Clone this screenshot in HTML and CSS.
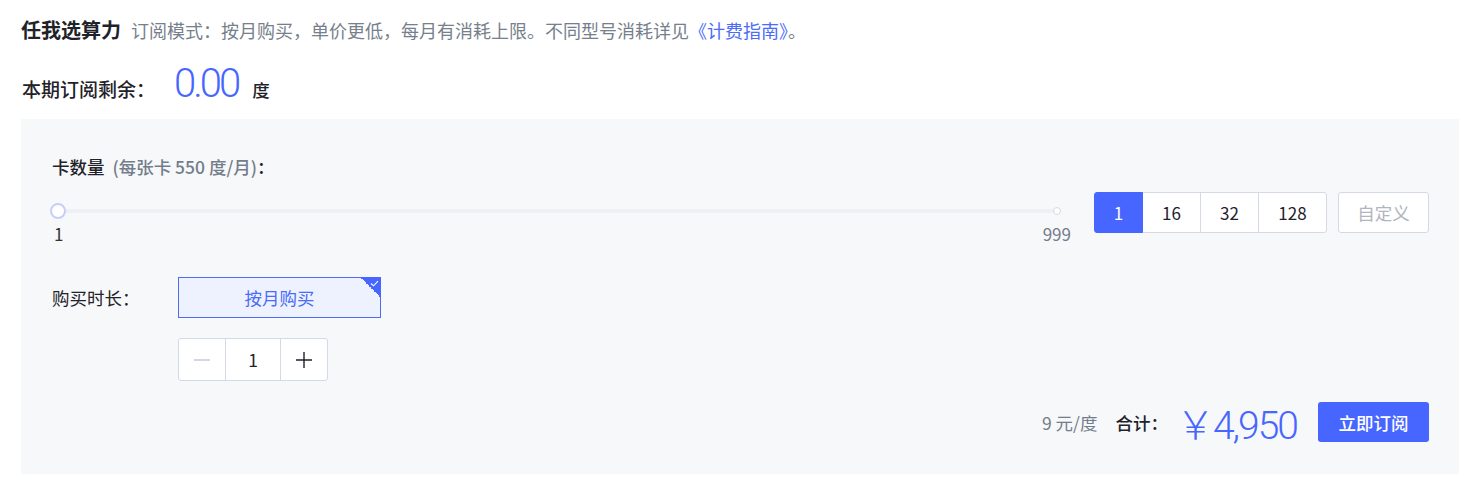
FILE: index.html
```html
<!DOCTYPE html>
<html lang="zh-CN">
<head>
  <meta charset="UTF-8">
  <meta name="viewport" content="width=device-width, initial-scale=1.0">
  <title>任我选算力</title>
  <link rel="stylesheet" href="styles.css">
</head>
<body>
  <div class="head">
    <h1>任我选算力</h1>
    <p class="desc">订阅模式：按月购买，单价更低，每月有消耗上限。不同型号消耗详见<a href="#">《计费指南》</a>。</p>
  </div>

  <div class="remain">
    <span class="remain-label">本期订阅剩余：</span>
    <span class="remain-num">0.00</span>
    <span class="remain-unit">度</span>
  </div>

  <div class="panel">
    <div class="field-title">卡数量 <span class="hint">(每张卡 550 度/月)</span>：</div>

    <div class="count-row">
      <div class="slider">
        <div class="track">
          <span class="thumb"></span>
          <span class="end-dot"></span>
        </div>
        <div class="marks">
          <span class="min">1</span>
          <span class="max">999</span>
        </div>
      </div>
      <div class="presets">
        <button class="preset active w1">1</button>
        <button class="preset w2">16</button>
        <button class="preset w2">32</button>
        <button class="preset w3">128</button>
      </div>
      <button class="custom">自定义</button>
    </div>

    <div class="period-row">
      <span class="label">购买时长：</span>
      <div class="option">
        按月购买
        <span class="corner">
          <svg width="9" height="7" viewBox="0 0 9 7"><path d="M1 3.5 L3.5 5.8 L8 1.2" fill="none" stroke="#fff" stroke-width="1.1"/></svg>
        </span>
      </div>
    </div>

    <div class="stepper">
      <span class="step minus">
        <svg width="16" height="16" viewBox="0 0 16 16"><path d="M0 8 H16" stroke="#c0c6d0" stroke-width="1.4"/></svg>
      </span>
      <span class="step value">1</span>
      <span class="step plus">
        <svg width="16" height="16" viewBox="0 0 16 16"><path d="M0 8 H16 M8 0 V16" stroke="#1f2329" stroke-width="1.4"/></svg>
      </span>
    </div>

    <div class="total-row">
      <span class="unit-price">9 元/度</span>
      <span class="total-label">合计：</span>
      <span class="total-num">￥4,950</span>
      <button class="buy">立即订阅</button>
    </div>
  </div>
</body>
</html>
```

FILE: styles.css
```css
* {
  box-sizing: border-box;
  margin: 0;
  padding: 0;
}
body {
  font-family: 'Noto Sans CJK SC', 'Noto Sans', sans-serif;
  color: #1f2329;
  background: #fff;
  padding: 16px 16px 0 21px;
}
button {
  font-family: inherit;
  background: none;
  border: none;
}
.head {
  display: flex;
  align-items: baseline;
  height: 28px;
  line-height: 28px;
}
h1 {
  font-size: 20px;
  font-weight: 700;
  margin-right: 10px;
}
.desc {
  font-size: 18px;
  color: #777f8c;
}
.desc a {
  color: #4a6cf7;
  text-decoration: none;
}
.remain {
  display: flex;
  align-items: baseline;
  margin-top: 16px;
  height: 48px;
  line-height: 48px;
}
.remain-label {
  font-size: 19px;
  font-weight: 500;
  width: 153px;
  padding-left: 1px;
}
.remain-num {
  font-family: 'Roboto', sans-serif;
  font-size: 40px;
  font-weight: 300;
  color: #4766ff;
  letter-spacing: -3px;
  margin-right: 14px;
}
.remain-unit {
  font-size: 17.5px;
  font-weight: 500;
}
.panel {
  margin-top: 11px;
  background: #f7f8fa;
  padding: 38px 30px 32px 31px;
}
.field-title {
  font-size: 17.5px;
  font-weight: 500;
  line-height: 20px;
}
.field-title .hint {
  color: #747d8b;
  margin-left: 4px;
}
.count-row {
  display: flex;
  align-items: flex-start;
  margin-top: 15px;
}
.slider {
  flex: 1;
  padding-top: 17px;
}
.track {
  position: relative;
  height: 4px;
  margin: 0 14px 0 6px;
  background: #eef0f4;
  border-radius: 2px;
}
.thumb {
  position: absolute;
  left: -8px;
  top: -6px;
  width: 16px;
  height: 16px;
  border-radius: 50%;
  border: 2px solid #c6cffb;
  background: #fff;
}
.end-dot {
  position: absolute;
  right: -4px;
  top: -2px;
  width: 8px;
  height: 8px;
  border-radius: 50%;
  border: 1px solid #d5d9e0;
  background: #fff;
}
.marks {
  display: flex;
  justify-content: space-between;
  margin-top: 11px;
  padding-left: 2px;
  font-size: 17px;
  line-height: 20px;
}
.marks .min {
  color: #333;
}
.marks .max {
  color: #747d8b;
}
.presets {
  display: flex;
  margin-left: 23px;
}
.preset {
  height: 41px;
  border: 1px solid #d3dae6;
  background: #fff;
  font-size: 17px;
  color: #1f2329;
  margin-left: -1px;
}
.preset:first-child {
  margin-left: 0;
  border-radius: 3px 0 0 3px;
}
.preset:last-child {
  border-radius: 0 3px 3px 0;
}
.preset.active {
  background: #4766ff;
  border-color: #4766ff;
  color: #fff;
  position: relative;
}
.w1 { width: 49px; }
.w2 { width: 59px; }
.w3 { width: 69px; }
.custom {
  width: 91px;
  height: 41px;
  margin-left: 11px;
  border: 1px solid #d3dae6;
  border-radius: 3px;
  background: #fff;
  color: #b0b5be;
  font-size: 17.5px;
}
.period-row {
  display: flex;
  align-items: center;
  margin-top: 33px;
}
.label {
  width: 126px;
  font-size: 17.5px;
}
.option {
  position: relative;
  width: 203px;
  height: 41px;
  line-height: 39px;
  text-align: center;
  border: 1px solid #4a6cf7;
  background: #eef2ff;
  color: #4a6cf7;
  font-size: 17.5px;
}
.corner {
  position: absolute;
  top: -1px;
  right: -1px;
  width: 21px;
  height: 21px;
  background: linear-gradient(45deg, transparent 50%, #4766ff 50%);
}
.corner svg {
  position: absolute;
  top: 3px;
  right: 2px;
}
.stepper {
  display: flex;
  margin: 20px 0 0 126px;
  width: 150px;
  height: 43px;
  border: 1px solid #d3dae6;
  border-radius: 3px;
  background: #fff;
}
.step {
  display: flex;
  align-items: center;
  justify-content: center;
  font-size: 17.5px;
}
.minus,
.plus {
  width: 47px;
}
.value {
  width: 56px;
  border-left: 1px solid #d3dae6;
  border-right: 1px solid #d3dae6;
}
.total-row {
  display: flex;
  justify-content: flex-end;
  align-items: center;
  margin-top: 21px;
  height: 40px;
}
.unit-price {
  font-size: 17.5px;
  color: #747d8b;
  margin-right: 18px;
}
.total-label {
  font-size: 17.5px;
  font-weight: 500;
  margin-right: 8px;
}
.total-num {
  font-family: 'Roboto', 'Noto Sans CJK SC', sans-serif;
  font-size: 39px;
  font-weight: 300;
  color: #4766ff;
  letter-spacing: -2px;
  margin-right: 21px;
}
.buy {
  width: 111px;
  height: 40px;
  border-radius: 3px;
  background: #4766ff;
  color: #fff;
  font-size: 17.5px;
  font-weight: 500;
}
```
